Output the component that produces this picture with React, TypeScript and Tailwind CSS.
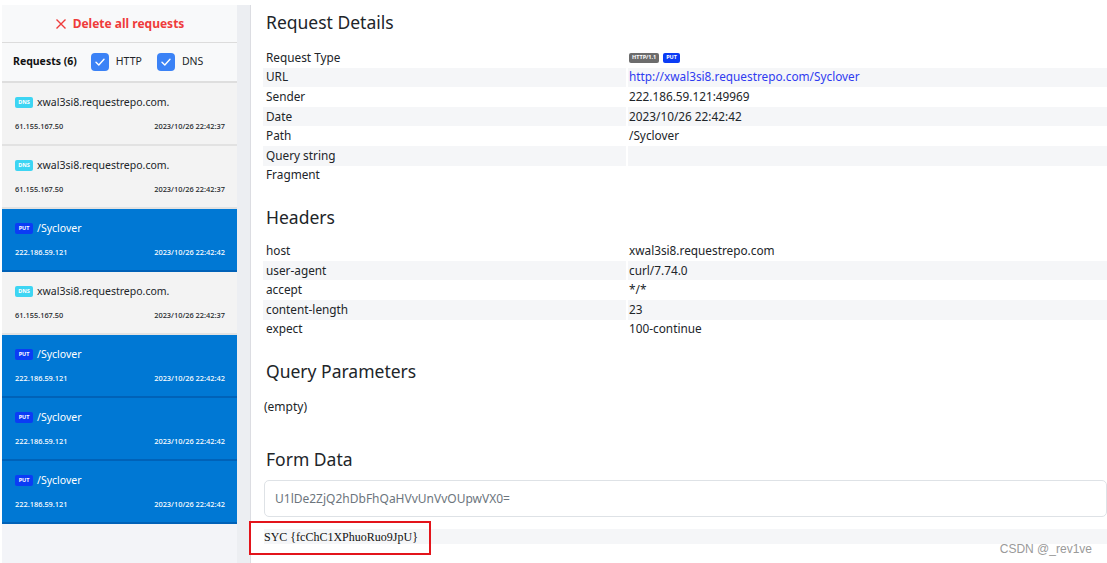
import React from "react";

const font = { fontFamily: '"Noto Sans", "Open Sans", sans-serif' };

type Item = { kind: "DNS" | "PUT"; title: string; ip: string; date: string };

const items: Item[] = [
  { kind: "DNS", title: "xwal3si8.requestrepo.com.", ip: "61.155.167.50", date: "2023/10/26 22:42:37" },
  { kind: "DNS", title: "xwal3si8.requestrepo.com.", ip: "61.155.167.50", date: "2023/10/26 22:42:37" },
  { kind: "PUT", title: "/Syclover", ip: "222.186.59.121", date: "2023/10/26 22:42:42" },
  { kind: "DNS", title: "xwal3si8.requestrepo.com.", ip: "61.155.167.50", date: "2023/10/26 22:42:37" },
  { kind: "PUT", title: "/Syclover", ip: "222.186.59.121", date: "2023/10/26 22:42:42" },
  { kind: "PUT", title: "/Syclover", ip: "222.186.59.121", date: "2023/10/26 22:42:42" },
  { kind: "PUT", title: "/Syclover", ip: "222.186.59.121", date: "2023/10/26 22:42:42" },
];

function Check() {
  return (
    <span className="flex h-[18px] w-[18px] items-center justify-center rounded-[4px] bg-[#3b82f6]">
      <svg width="12" height="12" viewBox="0 0 12 12" fill="none">
        <path d="M2 6.3 L4.8 9 L10 3.2" stroke="white" strokeWidth="1.4" strokeLinecap="round" strokeLinejoin="round" />
      </svg>
    </span>
  );
}

function SideItem({ it }: { it: Item }) {
  const blue = it.kind === "PUT";
  return (
    <div
      className={
        "flex h-[63px] flex-col border-b-2 pl-[13px] pr-[12px] " +
        (blue ? "bg-[#0078d4] border-[#0062b8] text-white" : "bg-[#f3f3f3] border-[#e2e2e2] text-[#212529]")
      }
    >
      <div className="mt-[11px] flex h-[16px] items-center gap-[4px]">
        {blue ? (
          <span className="flex h-[11px] w-[18px] items-center justify-center rounded-[2px] bg-[#0b3cf5] text-[5.5px] font-bold text-white">PUT</span>
        ) : (
          <span className="flex h-[11px] w-[18px] items-center justify-center rounded-[2px] bg-[#3dd5f3] text-[5.5px] font-bold text-white">DNS</span>
        )}
        <span className="text-[10.5px] leading-none">{it.title}</span>
      </div>
      <div className="mt-[13px] flex items-center justify-between text-[7.4px] font-medium leading-none">
        <span>{it.ip}</span>
        <span>{it.date}</span>
      </div>
    </div>
  );
}

function Row({ k, v, striped }: { k: string; v: React.ReactNode; striped: boolean }) {
  return (
    <div className="flex h-[19.6px] items-center text-[11.8px] leading-none text-[#212529]">
      <div className={"flex h-full w-[363px] items-center pl-[3px] " + (striped ? "bg-[#f5f6f8]" : "")}>{k}</div>
      <div className={"ml-[2px] flex h-full flex-1 items-center pl-[1px] " + (striped ? "bg-[#f5f6f8]" : "")}>{v}</div>
    </div>
  );
}

export default function App() {
  return (
    <div className="relative flex h-[563px] w-[1107px] overflow-hidden bg-white" style={font}>
      {/* Sidebar */}
      <div className="mt-[5px] ml-[2px] flex w-[235px] flex-col bg-[#f3f4f8]">
        <div className="flex h-[38px] items-center justify-center gap-[6px] border-b border-[#dcdcdc] bg-[#f8f9fa] text-[12px] font-bold text-[#ef3b3b]">
          <svg width="12" height="12" viewBox="0 0 12 12">
            <path d="M1.5 1.5 L10.5 10.5 M10.5 1.5 L1.5 10.5" stroke="#ef3b3b" strokeWidth="1.4" />
          </svg>
          <span>Delete all requests</span>
        </div>
        <div className="flex h-[40px] items-center border-b-2 border-[#dedede] bg-[#f8f9fa] pl-[11px] text-[10.5px]">
          <span className="font-bold text-[#111]">Requests (6)</span>
          <span className="ml-[14px]"><Check /></span>
          <span className="ml-[7px] text-[#212529]">HTTP</span>
          <span className="ml-[15px]"><Check /></span>
          <span className="ml-[7px] text-[#212529]">DNS</span>
        </div>
        {items.map((it, i) => (
          <SideItem key={i} it={it} />
        ))}
      </div>
      {/* strip */}
      <div className="mt-[5px] w-[14px] border-r border-[#dcdde2] bg-[#eceef2]" />
      {/* Main */}
      <div className="flex-1 pl-[12px]">
        <h2 className="mt-[10px] ml-[3px] text-[17.5px] leading-[24px] text-[#212529]">Request Details</h2>
        <div className="mt-[14px]">
          <Row k="Request Type" striped={false} v={
            <span className="flex gap-[4px]">
              <span className="flex h-[10px] items-center rounded-[2px] bg-[#6c6c6c] px-[3px] text-[5.5px] font-bold text-white">HTTP/1.1</span>
              <span className="flex h-[10px] items-center rounded-[2px] bg-[#0b3cf5] px-[3px] text-[5.5px] font-bold text-white">PUT</span>
            </span>
          } />
          <Row k="URL" striped v={<span className="text-[#2f3bf0]">http://xwal3si8.requestrepo.com/Syclover</span>} />
          <Row k="Sender" striped={false} v="222.186.59.121:49969" />
          <Row k="Date" striped v="2023/10/26 22:42:42" />
          <Row k="Path" striped={false} v="/Syclover" />
          <Row k="Query string" striped v="" />
          <Row k="Fragment" striped={false} v="" />
        </div>
        <h2 className="mt-[20px] ml-[3px] text-[17.5px] leading-[24px] text-[#212529]">Headers</h2>
        <div className="mt-[12px]">
          <Row k="host" striped={false} v="xwal3si8.requestrepo.com" />
          <Row k="user-agent" striped v="curl/7.74.0" />
          <Row k="accept" striped={false} v="*/*" />
          <Row k="content-length" striped v="23" />
          <Row k="expect" striped={false} v="100-continue" />
        </div>
        <h2 className="mt-[20px] ml-[3px] text-[17.5px] leading-[24px] text-[#212529]">Query Parameters</h2>
        <div className="mt-[16px] ml-[1px] text-[12px] leading-[16px] text-[#212529]">(empty)</div>
        <h2 className="mt-[32px] ml-[3px] text-[17.5px] leading-[24px] text-[#212529]">Form Data</h2>
        <div className="mt-[9px] ml-[1px] flex h-[37px] items-center rounded-[5px] border border-[#dee2e6] pl-[10px] text-[12px] text-[#6c757d]">
          U1lDe2ZjQ2hDbFhQaHVvUnVvOUpwVX0=
        </div>
        <div className="relative mt-[12px] ml-[1px] flex h-[15px] items-center bg-[#f5f6f8] text-[12px] text-[#111]" style={{ fontFamily: '"Liberation Serif", "DejaVu Serif", serif' }}>
          SYC {"{"}fcChC1XPhuoRuo9JpU{"}"}
          <div className="absolute left-[-15px] top-[-8px] h-[34px] w-[182px] border-2 border-[#e3141b]" />
        </div>
      </div>
      <div className="absolute right-[15px] top-[540px] text-[12px] text-[#9a9a9a]" style={{ fontFamily: '"Liberation Sans", Arial, sans-serif' }}>
        CSDN @_rev1ve
      </div>
    </div>
  );
}
